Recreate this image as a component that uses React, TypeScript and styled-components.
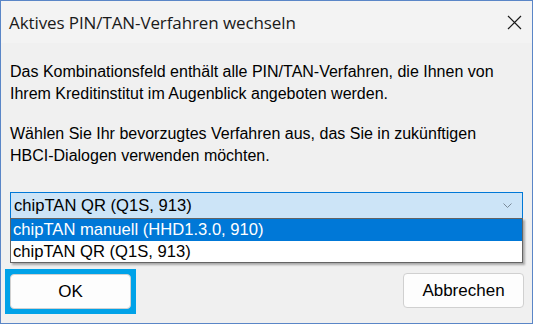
import React from "react";
import styled, { createGlobalStyle } from "styled-components";

const Global = createGlobalStyle`
  html, body { margin: 0; padding: 0; background: #f0f0f0; }
  #root { width: 533px; height: 324px; }
`;

const Window = styled.div`
  box-sizing: border-box;
  width: 533px;
  height: 324px;
  border: 1px solid #5a86c7;
  background: #f0f0f0;
  display: flex;
  flex-direction: column;
  font-family: "Liberation Sans", Arial, sans-serif;
  color: #000;
`;

const TitleBar = styled.div`
  height: 42px;
  flex: none;
  background: #f3f3f3;
  display: flex;
  align-items: center;
  justify-content: space-between;
  padding: 0 10px 0 8px;
`;

const Title = styled.div`
  font-family: "Open Sans", "Noto Sans", sans-serif;
  font-size: 17px;
  color: #1a1a1a;
  letter-spacing: -0.1px;
`;

const CloseButton = styled.div`
  width: 16px;
  height: 16px;
  display: flex;
  align-items: center;
  justify-content: center;
`;

const Body = styled.div`
  flex: 1;
  display: flex;
  flex-direction: column;
  padding: 18px 9px 0 9px;
`;

const Paragraph = styled.p<{ $gap: number }>`
  margin: 0 0 ${(p) => p.$gap}px 0;
  font-size: 16px;
  line-height: 22px;
`;

const ComboWrap = styled.div`
  position: relative;
`;

const Combo = styled.div`
  box-sizing: border-box;
  height: 27px;
  border: 1px solid #0078d7;
  background: #cce4f7;
  display: flex;
  align-items: center;
  justify-content: space-between;
  padding: 0 10px 0 3px;
  font-size: 16.6px;
`;

const List = styled.div`
  position: absolute;
  left: 0;
  right: 0;
  top: 26px;
  box-sizing: border-box;
  border: 1px solid #646464;
  background: #fff;
  box-shadow: 2px 2px 2px rgba(0, 0, 0, 0.3);
  z-index: 2;
`;

const Item = styled.div<{ $selected?: boolean }>`
  height: ${(p) => (p.$selected ? 22 : 21)}px;
  line-height: ${(p) => (p.$selected ? 22 : 21)}px;
  padding: 0 2px;
  font-size: 16.6px;
  background: ${(p) => (p.$selected ? "#0078d7" : "#fff")};
  color: ${(p) => (p.$selected ? "#fff" : "#000")};
`;

const ButtonRow = styled.div`
  margin-top: 50px;
  display: flex;
  justify-content: space-between;
`;

const Focus = styled.div`
  margin-left: -5px;
  padding: 5px;
  background: #00a2e8;
  display: flex;
`;

const Button = styled.div`
  box-sizing: border-box;
  width: 121px;
  height: 35px;
  background: #fdfdfd;
  border: 1px solid #d0d0d0;
  border-radius: 4px;
  display: flex;
  align-items: center;
  justify-content: center;
  font-size: 17px;
`;

const CancelButton = styled(Button)`
  margin-top: 4px;
  margin-right: -1px;
`;

export default function App() {
  return (
    <>
      <Global />
      <Window>
        <TitleBar>
          <Title>Aktives PIN/TAN-Verfahren wechseln</Title>
          <CloseButton>
            <svg width="15" height="15" viewBox="0 0 15 15">
              <path d="M1 1 L14 14 M14 1 L1 14" stroke="#1a1a1a" strokeWidth="1.2" />
            </svg>
          </CloseButton>
        </TitleBar>
        <Body>
          <Paragraph $gap={18}>
            Das Kombinationsfeld enthält alle PIN/TAN-Verfahren, die Ihnen von
            <br />
            Ihrem Kreditinstitut im Augenblick angeboten werden.
          </Paragraph>
          <Paragraph $gap={25}>
            Wählen Sie Ihr bevorzugtes Verfahren aus, das Sie in zukünftigen
            <br />
            HBCI-Dialogen verwenden möchten.
          </Paragraph>
          <ComboWrap>
            <Combo>
              <span>chipTAN QR (Q1S, 913)</span>
              <svg width="9" height="6" viewBox="0 0 9 6">
                <path d="M0.5 0.5 L4.5 4.5 L8.5 0.5" stroke="#7a8a99" strokeWidth="1" fill="none" />
              </svg>
            </Combo>
            <List>
              <Item $selected>chipTAN manuell (HHD1.3.0, 910)</Item>
              <Item>chipTAN QR (Q1S, 913)</Item>
            </List>
          </ComboWrap>
          <ButtonRow>
            <Focus>
              <Button>OK</Button>
            </Focus>
            <CancelButton>Abbrechen</CancelButton>
          </ButtonRow>
        </Body>
      </Window>
    </>
  );
}
